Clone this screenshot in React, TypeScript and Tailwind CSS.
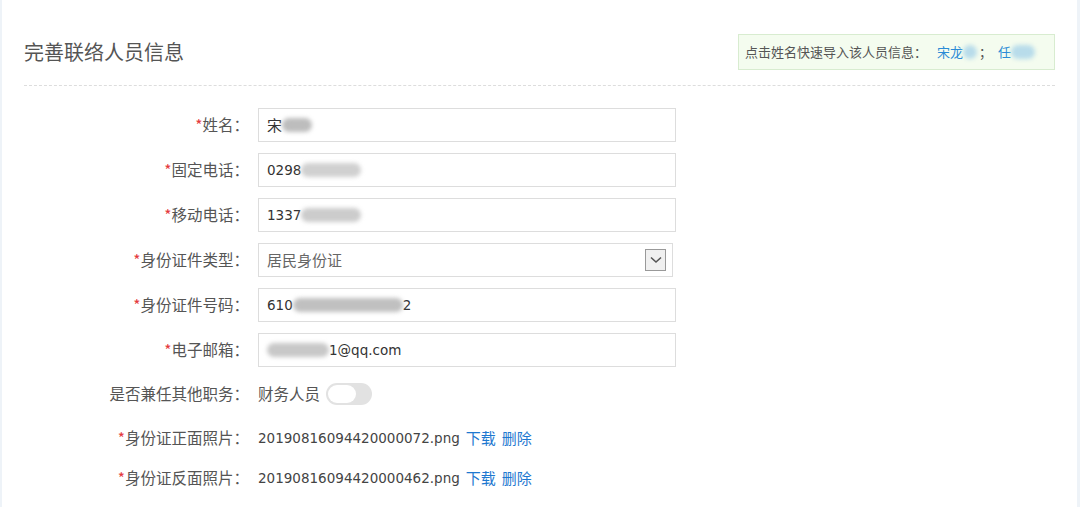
import React from "react";

const F = { fontFamily: '"Noto Sans CJK SC", "Noto Sans", sans-serif' };
const L = { fontFamily: '"DejaVu Sans", "Noto Sans CJK SC", sans-serif' };

function Blur({ w, c = "#c8c8c8" }: { w: number; c?: string }) {
  return (
    <span
      className="inline-block align-middle h-[14px] rounded-full blur-[2px]"
      style={{ width: w, background: c }}
    />
  );
}

function Lat({ children }: { children: React.ReactNode }) {
  return (
    <span className="text-[13.5px]" style={L}>
      {children}
    </span>
  );
}

function Label({ req, children }: { req?: boolean; children: React.ReactNode }) {
  return (
    <div className="w-[225px] shrink-0 text-right text-[15.5px] text-[#555]">
      {req && <span className="text-[#e4393c]">*</span>}
      {children}：
    </div>
  );
}

function Input({ children }: { children: React.ReactNode }) {
  return (
    <div className="ml-[9px] w-[418px] h-[34px] border border-[#ddd] bg-white flex items-center px-[8px] text-[15px] text-[#333]">
      {children}
    </div>
  );
}

export default function App() {
  return (
    <div className="w-[1080px] h-[507px] bg-[#eef3f8] flex overflow-hidden" style={F}>
      <div className="ml-[2px] w-[1075px] h-full bg-white pl-[22px] pr-[22px]">
        <div className="h-[86px] pt-[34px] flex items-start justify-between border-b border-dashed border-[#ddd]">
          <div className="text-[20px] leading-[36px] text-[#555]">完善联络人员信息</div>
          <div className="w-[317px] h-[36px] border border-[#d8ecd0] bg-[#f4fcef] flex items-center pl-[6px] text-[13px] text-[#555]">
            点击姓名快速导入该人员信息：
            <span className="ml-[10px] text-[#2a8bd6]">宋龙</span>
            <Blur w={14} c="#b8dcea" />
            <span className="ml-[2px]">；</span>
            <span className="ml-[6px] text-[#2a8bd6]">任</span>
            <Blur w={24} c="#b8dcea" />
          </div>
        </div>
        <div className="mt-[22px] flex flex-col gap-[11px]">
          <div className="flex items-center">
            <Label req>姓名</Label>
            <Input>宋<Blur w={30} c="#bdbdbd" /></Input>
          </div>
          <div className="flex items-center">
            <Label req>固定电话</Label>
            <Input><Lat>0298</Lat><Blur w={60} c="#d0d0d0" /></Input>
          </div>
          <div className="flex items-center">
            <Label req>移动电话</Label>
            <Input><Lat>1337</Lat><Blur w={60} c="#cccccc" /></Input>
          </div>
          <div className="flex items-center">
            <Label req>身份证件类型</Label>
            <div className="ml-[9px] w-[415px] h-[34px] border border-[#ddd] bg-white flex items-center justify-between pl-[8px] pr-[6px] text-[15px] text-[#666]">
              <span>居民身份证</span>
              <span className="w-[21px] h-[22px] border border-[#999] bg-[#f0f0f0] flex items-center justify-center">
                <svg width="12" height="8" viewBox="0 0 12 8">
                  <path d="M1 1.5 L6 6 L11 1.5" stroke="#555" strokeWidth="1.6" fill="none" />
                </svg>
              </span>
            </div>
          </div>
          <div className="flex items-center">
            <Label req>身份证件号码</Label>
            <Input><Lat>610</Lat><Blur w={110} c="#c0c0c0" /><Lat>2</Lat></Input>
          </div>
          <div className="flex items-center">
            <Label req>电子邮箱</Label>
            <Input><Blur w={62} c="#c8c8c8" /><Lat>1@qq.com</Lat></Input>
          </div>
          <div className="flex items-center h-[34px] mt-[-1px]">
            <Label>是否兼任其他职务</Label>
            <div className="ml-[9px] flex items-center text-[15.5px] text-[#555]">
              财务人员
              <span className="ml-[6px] w-[46px] h-[22px] rounded-full bg-[#e2e2e2] flex items-center pl-[2px]">
                <span className="w-[28px] h-[18px] rounded-full bg-white" />
              </span>
            </div>
          </div>
          <div className="flex items-center h-[34px] mt-[-1px]">
            <Label req>身份证正面照片</Label>
            <div className="ml-[9px] flex items-center text-[15px] text-[#444]">
              <Lat>20190816094420000072.png</Lat>
              <span className="ml-[6px] text-[#1e78d0]">下载</span>
              <span className="ml-[6px] text-[#1e78d0]">删除</span>
            </div>
          </div>
          <div className="flex items-center h-[34px] mt-[-5px]">
            <Label req>身份证反面照片</Label>
            <div className="ml-[9px] flex items-center text-[15px] text-[#444]">
              <Lat>20190816094420000462.png</Lat>
              <span className="ml-[6px] text-[#1e78d0]">下载</span>
              <span className="ml-[6px] text-[#1e78d0]">删除</span>
            </div>
          </div>
        </div>
      </div>
    </div>
  );
}
